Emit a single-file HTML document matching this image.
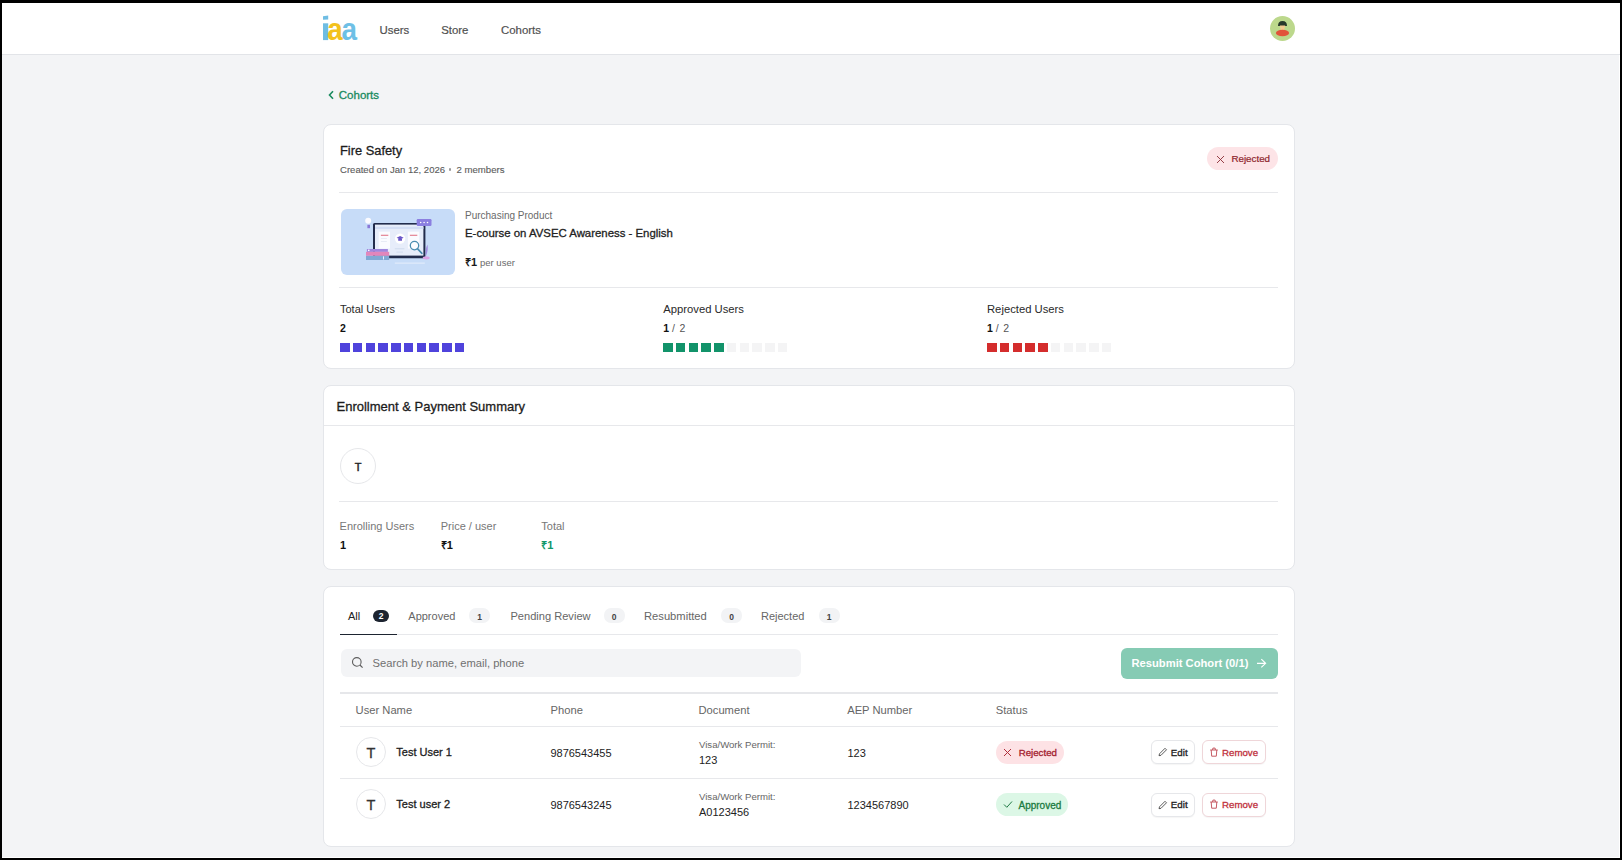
<!DOCTYPE html>
<html><head><meta charset="utf-8">
<style>
*{box-sizing:border-box;margin:0;padding:0}
html,body{width:1622px;height:860px;overflow:hidden;background:#000}
body{font-family:"Liberation Sans",sans-serif;position:relative;color:#1f2937}
#bg{position:absolute;left:2px;top:3px;width:1618px;height:855px;background:#fff}
#page{position:absolute;left:2px;top:55px;width:1617px;height:802px;background:#f3f4f6}
.t{position:absolute;line-height:1;white-space:nowrap}
.b{position:absolute}
.m{-webkit-text-stroke-width:0.3px}
.m2{-webkit-text-stroke-width:0.2px}
.hr{position:absolute;height:1px;background:#e7e8eb}
.card{position:absolute;left:323px;width:972px;background:#fff;border:1px solid #e4e6ea;border-radius:8px}
.sq{position:absolute;top:343.2px;width:9.6px;height:9px}
.sb{position:absolute;border-radius:7px;background:#f2f3f5;height:15px;top:608px;width:21px;font-size:8.5px;font-weight:bold;color:#444;text-align:center;line-height:18px}
</style></head><body>
<div id="bg"></div>
<!-- header -->
<div class="hr" style="left:2px;top:54px;width:1618px;background:#e2e4e8"></div>
<div id="page"></div>

<svg class="b" style="left:318px;top:12px" width="44" height="32" viewBox="0 0 44 32">
  <path d="M5 4.2 L10.2 3.6 L10.2 7.6 L5 7.8Z" fill="#6fbde3"/>
  <rect x="5" y="11.3" width="5.2" height="16.8" fill="#6fbde3"/>
  <text x="9.2" y="28.3" font-family="Liberation Sans" font-weight="bold" font-size="31" fill="#f3c21c" textLength="15.5" lengthAdjust="spacingAndGlyphs">a</text>
  <text x="23.6" y="28.3" font-family="Liberation Sans" font-weight="bold" font-size="31" fill="#6ec0e6" textLength="15.5" lengthAdjust="spacingAndGlyphs">a</text>
</svg>
<div class="t m2" style="left:379.5px;top:25.1px;font-size:11.4px;color:#505050">Users</div>
<div class="t m2" style="left:441.2px;top:25.1px;font-size:11.4px;color:#505050">Store</div>
<div class="t m2" style="left:501px;top:25.1px;font-size:11.4px;color:#505050">Cohorts</div>

<div class="b" style="left:1270px;top:16px;width:25px;height:25px;border-radius:50%;background:#bcd88c;overflow:hidden">
  <svg width="25" height="25" viewBox="0 0 25 25">
    <path d="M8 10 Q8 5 12.5 5 Q17 5 17 10 Z" fill="#27382a"/>
    <path d="M9.8 9.5 L15.2 9.5 L14.2 14 L10.8 14Z" fill="#f3c98e"/>
    <ellipse cx="12.5" cy="17" rx="6.6" ry="3.2" fill="#e1533a"/>
  </svg>
</div>

<!-- back link -->
<svg class="b" style="left:328px;top:90px" width="7" height="10" viewBox="0 0 7 10"><path d="M5 1.2 L1.5 5 L5 8.8" fill="none" stroke="#198a5e" stroke-width="1.6"/></svg>
<div class="t m" style="left:338.8px;top:89.5px;font-size:11.5px;color:#198a5e">Cohorts</div>

<!-- Card 1 -->
<div class="card" style="top:124px;height:245px"></div>
<div class="t m" style="left:340px;top:145.3px;font-size:12.85px;color:#1c1c1c">Fire Safety</div>
<div class="t" style="left:340px;top:164.6px;font-size:9.55px;color:#5c5c5c;-webkit-text-stroke-width:0.12px">Created on Jan 12, 2026</div>
<div class="b" style="left:449px;top:168.4px;width:2.2px;height:2.2px;border-radius:50%;background:#999"></div>
<div class="t" style="left:456.5px;top:164.6px;font-size:9.6px;color:#5c5c5c;-webkit-text-stroke-width:0.12px">2 members</div>

<div class="b" style="left:1207px;top:147px;width:71px;height:22.5px;border-radius:12px;background:#fde4e7"></div>
<svg class="b" style="left:1216px;top:154.5px" width="9" height="9" viewBox="0 0 9 9"><path d="M1 1L8 8M8 1L1 8" stroke="#8b2c35" stroke-width="0.9"/></svg>
<div class="t m2" style="left:1231.4px;top:153.9px;font-size:9.8px;color:#8e1f2c">Rejected</div>

<div class="hr" style="left:339px;top:192px;width:939px"></div>

<div class="b" style="left:340.5px;top:209px;width:114.5px;height:66px;border-radius:6px;background:#c7dcf8;overflow:hidden">
  <svg width="115" height="66" viewBox="0 0 115 66">
    <rect x="53.8" y="53.6" width="30" height="1" fill="#e6eefc"/>
    <rect x="32" y="13.9" width="52.4" height="35.3" rx="1.5" fill="#222c4c"/>
    <rect x="34" y="15.6" width="48.4" height="31" fill="#e7edfa"/>
    <rect x="34" y="17.8" width="48.4" height="2.2" fill="#d3def5"/>
    <rect x="37.7" y="22.6" width="11.3" height="17" fill="#fafbff"/>
    <rect x="66.9" y="22.6" width="11.4" height="17" fill="#fafbff"/>
    <rect x="39.9" y="25.7" width="7.4" height="1.3" fill="#e58d9c"/>
    <rect x="68.9" y="25.7" width="7.4" height="1.3" fill="#e58d9c"/>
    <rect x="39.9" y="29" width="6" height="0.8" fill="#e3e8f3"/>
    <rect x="39.9" y="32" width="6" height="0.8" fill="#e3e8f3"/>
    <circle cx="59.1" cy="29.6" r="5.2" fill="#fff"/>
    <path d="M55.6 28.8 L59.1 27 L62.6 28.8 L59.1 30.6Z" fill="#6b57c9"/>
    <path d="M57.2 29.8 L57.2 31.8 L61 31.8 L61 29.8Z" fill="#6b57c9"/>
    <rect x="53.8" y="39.2" width="9.6" height="1.1" fill="#d2dcef"/>
    <rect x="55.5" y="42.6" width="6.5" height="1" fill="#d2dcef"/>
    <circle cx="73.5" cy="36.6" r="4.2" fill="rgba(255,255,255,0.35)" stroke="#4a8cb0" stroke-width="1.3"/>
    <path d="M76.4 39.6 L80.9 44.4" stroke="#4a8cb0" stroke-width="1.6" stroke-linecap="round"/>
    <rect x="75.7" y="10" width="14.8" height="7" rx="1.2" fill="#8b7fe0"/>
    <circle cx="79.7" cy="13.5" r="0.8" fill="#fff"/><circle cx="83.1" cy="13.5" r="0.8" fill="#fff"/><circle cx="86.5" cy="13.5" r="0.8" fill="#fff"/>
    <rect x="25.9" y="40" width="21" height="2.9" fill="#9e86dd"/>
    <rect x="27" y="40.6" width="1.5" height="1.5" fill="#fff"/>
    <rect x="25" y="42.8" width="23.2" height="4" fill="#e286bb"/>
    <rect x="25" y="46.9" width="23.2" height="4.1" fill="#80a9d4"/>
    <rect x="42" y="47.3" width="1" height="3.2" fill="#e7efff"/>
    <circle cx="27.2" cy="11.8" r="3" fill="#fbfbff"/>
    <rect x="26.4" y="15.8" width="2.6" height="3.4" fill="#8a78d8"/>
    <path d="M85 47 Q87.5 41 86.5 35.5 Q84 40 85 47Z" fill="#a08be0"/>
    <ellipse cx="85.2" cy="48.8" rx="3.5" ry="1.6" fill="#dba3e6"/>
  </svg>
</div>
<div class="t" style="left:465px;top:211.4px;font-size:10px;color:#6a6a6a">Purchasing Product</div>
<div class="t m" style="left:465px;top:227.6px;font-size:11.4px;color:#222">E-course on AVSEC Awareness - English</div>
<div class="t" style="left:465px;top:257.2px;font-size:11px;color:#1a1a1a;font-weight:bold">&#8377;1</div>
<div class="t" style="left:480px;top:257.7px;font-size:9.5px;color:#6a6a6a">per user</div>

<div class="hr" style="left:339px;top:287px;width:939px"></div>

<div class="t" style="left:340px;top:303.5px;font-size:11px;color:#2a2a2a">Total Users</div>
<div class="t" style="left:340px;top:322.9px;font-size:10.5px;color:#111;font-weight:bold">2</div>
<div class="t" style="left:663.3px;top:304px;font-size:11.25px;color:#2a2a2a">Approved Users</div>
<div class="t" style="left:663.3px;top:322.9px;font-size:10.5px;color:#111"><b>1</b>&nbsp;<span style="color:#555;word-spacing:1.6px">/ 2</span></div>
<div class="t" style="left:987px;top:304px;font-size:11.25px;color:#2a2a2a">Rejected Users</div>
<div class="t" style="left:987px;top:322.9px;font-size:10.5px;color:#111"><b>1</b>&nbsp;<span style="color:#555;word-spacing:1.6px">/ 2</span></div>

<div class="sq" style="left:340.00px;background:#4f43dc"></div><div class="sq" style="left:352.75px;background:#4f43dc"></div><div class="sq" style="left:365.50px;background:#4f43dc"></div><div class="sq" style="left:378.25px;background:#4f43dc"></div><div class="sq" style="left:391.00px;background:#4f43dc"></div><div class="sq" style="left:403.75px;background:#4f43dc"></div><div class="sq" style="left:416.50px;background:#4f43dc"></div><div class="sq" style="left:429.25px;background:#4f43dc"></div><div class="sq" style="left:442.00px;background:#4f43dc"></div><div class="sq" style="left:454.75px;background:#4f43dc"></div>
<div class="sq" style="left:663.00px;background:#12936a"></div><div class="sq" style="left:675.75px;background:#12936a"></div><div class="sq" style="left:688.50px;background:#12936a"></div><div class="sq" style="left:701.25px;background:#12936a"></div><div class="sq" style="left:714.00px;background:#12936a"></div><div class="sq" style="left:726.75px;background:#f4f4f5"></div><div class="sq" style="left:739.50px;background:#f4f4f5"></div><div class="sq" style="left:752.25px;background:#f4f4f5"></div><div class="sq" style="left:765.00px;background:#f4f4f5"></div><div class="sq" style="left:777.75px;background:#f4f4f5"></div>
<div class="sq" style="left:987.00px;background:#d42d2d"></div><div class="sq" style="left:999.75px;background:#d42d2d"></div><div class="sq" style="left:1012.50px;background:#d42d2d"></div><div class="sq" style="left:1025.25px;background:#d42d2d"></div><div class="sq" style="left:1038.00px;background:#d42d2d"></div><div class="sq" style="left:1050.75px;background:#f4f4f5"></div><div class="sq" style="left:1063.50px;background:#f4f4f5"></div><div class="sq" style="left:1076.25px;background:#f4f4f5"></div><div class="sq" style="left:1089.00px;background:#f4f4f5"></div><div class="sq" style="left:1101.75px;background:#f4f4f5"></div>

<!-- Card 2 -->
<div class="card" style="top:385px;height:185px"></div>
<div class="t m" style="left:336.5px;top:400.4px;font-size:13px;color:#1c1c1c">Enrollment &amp; Payment Summary</div>
<div class="hr" style="left:324px;top:425px;width:970px"></div>
<div class="b" style="left:340px;top:448px;width:36px;height:36px;border-radius:50%;border:1px solid #e6e7ea"></div>
<div class="t m" style="left:340px;width:36px;text-align:center;top:461.7px;font-size:11px;color:#222;-webkit-text-stroke-width:0.45px">T</div>
<div class="hr" style="left:339px;top:501px;width:939px"></div>
<div class="t" style="left:339.6px;top:520.7px;font-size:11px;color:#777">Enrolling Users</div>
<div class="t" style="left:340px;top:539.7px;font-size:11px;color:#111;font-weight:bold">1</div>
<div class="t" style="left:440.7px;top:520.7px;font-size:11px;color:#777">Price / user</div>
<div class="t" style="left:440.7px;top:539.7px;font-size:11px;color:#111;font-weight:bold">&#8377;1</div>
<div class="t" style="left:541.3px;top:520.7px;font-size:11px;color:#777">Total</div>
<div class="t" style="left:541.3px;top:539.7px;font-size:11px;color:#10976a;font-weight:bold">&#8377;1</div>

<!-- Card 3 -->
<div class="card" style="top:586px;height:261px"></div>
<div class="t" style="left:348px;top:610.7px;font-size:11px;color:#222">All</div>
<div class="b" style="left:373px;top:610px;width:16px;height:12px;border-radius:6px;background:#1d2430;color:#fff;font-size:8.5px;font-weight:bold;text-align:center;line-height:13px">2</div>
<div class="t" style="left:408.3px;top:610.7px;font-size:11px;color:#666">Approved</div>
<div class="sb" style="left:469px">1</div>
<div class="t" style="left:510.4px;top:610.7px;font-size:11.1px;color:#666">Pending Review</div>
<div class="sb" style="left:603.6px">0</div>
<div class="t" style="left:644px;top:610.7px;font-size:11.2px;color:#666">Resubmitted</div>
<div class="sb" style="left:721px">0</div>
<div class="t" style="left:761px;top:610.7px;font-size:11px;color:#666">Rejected</div>
<div class="sb" style="left:818.5px">1</div>
<div class="hr" style="left:340px;top:634px;width:938px"></div>
<div class="b" style="left:340px;top:633.5px;width:57px;height:1.6px;background:#1d2430"></div>

<div class="b" style="left:341px;top:648.5px;width:460px;height:28.5px;border-radius:6px;background:#f3f4f6"></div>
<svg class="b" style="left:351px;top:656px" width="14" height="14" viewBox="0 0 14 14"><circle cx="5.8" cy="5.9" r="4.3" fill="none" stroke="#5e5e5e" stroke-width="1.1"/><path d="M8.9 9 L11.6 11.6" stroke="#5e5e5e" stroke-width="1.2"/></svg>
<div class="t" style="left:372.5px;top:657.5px;font-size:11.2px;color:#707070">Search by name, email, phone</div>

<div class="b" style="left:1121px;top:648px;width:157px;height:30.5px;border-radius:6px;background:#86cbb4"></div>
<div class="t" style="left:1131.5px;top:657.8px;font-size:11.2px;color:#fff;font-weight:bold">Resubmit Cohort (0/1)</div>
<svg class="b" style="left:1255px;top:657px" width="12" height="12" viewBox="0 0 12 12"><path d="M2 6.3 L10.6 6.3 M6.3 2.2 L10.6 6.3 L6.3 10.4" fill="none" stroke="#fff" stroke-width="1.15"/></svg>

<div class="b" style="left:340px;top:692px;width:938px;height:2px;background:#e6e7ea"></div>
<div class="t" style="left:355.6px;top:704.9px;font-size:11.2px;color:#666">User Name</div>
<div class="t" style="left:550.6px;top:704.9px;font-size:11.2px;color:#666">Phone</div>
<div class="t" style="left:698.5px;top:704.9px;font-size:11.2px;color:#666">Document</div>
<div class="t" style="left:847.2px;top:704.9px;font-size:11.2px;color:#666">AEP Number</div>
<div class="t" style="left:995.8px;top:704.9px;font-size:11.2px;color:#666">Status</div>
<div class="hr" style="left:340px;top:726px;width:938px"></div>

<!-- row 1 -->
<div class="b" style="left:356px;top:737px;width:30px;height:30px;border-radius:50%;border:1px solid #e6e7ea"></div>
<div class="t m" style="left:356px;width:30px;text-align:center;top:745.5px;font-size:14.5px;color:#333">T</div>
<div class="t m" style="left:396.3px;top:747.1px;font-size:11px;color:#222">Test User 1</div>
<div class="t" style="left:550.4px;top:747.7px;font-size:11px;color:#222">9876543455</div>
<div class="t" style="left:699px;top:739.9px;font-size:9.6px;color:#666">Visa/Work Permit:</div>
<div class="t" style="left:699px;top:754.7px;font-size:11px;color:#222">123</div>
<div class="t" style="left:847.5px;top:747.9px;font-size:11px;color:#222">123</div>
<div class="b" style="left:996px;top:741px;width:68px;height:22.5px;border-radius:12px;background:#fde2e5"></div>
<svg class="b" style="left:1002.5px;top:748px" width="9" height="9" viewBox="0 0 9 9"><path d="M1 1L8 8M8 1L1 8" stroke="#b0303c" stroke-width="1"/></svg>
<div class="t m" style="left:1018.7px;top:748.2px;font-size:9.7px;color:#a3202d">Rejected</div>
<div class="b" style="left:1150.5px;top:740px;width:44.5px;height:24px;border-radius:6px;border:1px solid #e6e7ea;background:#fff;box-shadow:0 1px 1px rgba(0,0,0,0.04)"></div>
<svg class="b" style="left:1157px;top:747px" width="11" height="11" viewBox="0 0 11 11"><path d="M2 8.7 L2.5 6.8 L8 1.3 L9.5 2.8 L4 8.3 Z" fill="none" stroke="#333" stroke-width="0.8"/></svg>
<div class="t m" style="left:1170.8px;top:747.9px;font-size:9.8px;color:#222">Edit</div>
<div class="b" style="left:1202.4px;top:740px;width:63.5px;height:24px;border-radius:6px;border:1px solid #efd6d9;background:#fff;box-shadow:0 1px 1px rgba(0,0,0,0.04)"></div>
<svg class="b" style="left:1209px;top:746.5px" width="10" height="11" viewBox="0 0 10 11"><path d="M1.2 3 L8.8 3 M3.6 3 L3.9 1.1 L6.1 1.1 L6.4 3 M2.2 3 L2.7 9.2 L7.3 9.2 L7.8 3" fill="none" stroke="#bf4a54" stroke-width="0.9"/></svg>
<div class="t m" style="left:1222px;top:747.6px;font-size:9.7px;color:#c0303c">Remove</div>
<div class="hr" style="left:340px;top:778px;width:938px"></div>

<!-- row 2 -->
<div class="b" style="left:356px;top:789px;width:30px;height:30px;border-radius:50%;border:1px solid #e6e7ea"></div>
<div class="t m" style="left:356px;width:30px;text-align:center;top:797.5px;font-size:14.5px;color:#333">T</div>
<div class="t m" style="left:396.3px;top:799.1px;font-size:11px;color:#222">Test user 2</div>
<div class="t" style="left:550.4px;top:799.7px;font-size:11px;color:#222">9876543245</div>
<div class="t" style="left:699px;top:791.9px;font-size:9.6px;color:#666">Visa/Work Permit:</div>
<div class="t" style="left:699px;top:806.7px;font-size:11px;color:#222">A0123456</div>
<div class="t" style="left:847.5px;top:799.9px;font-size:11px;color:#222">1234567890</div>
<div class="b" style="left:996px;top:793px;width:72px;height:22.5px;border-radius:12px;background:#dcf7e6"></div>
<svg class="b" style="left:1002.5px;top:800px" width="10" height="9" viewBox="0 0 10 9"><path d="M1 4.5 L3.8 7.3 L9 1.5" fill="none" stroke="#207a45" stroke-width="1"/></svg>
<div class="t m" style="left:1018.5px;top:800.8px;font-size:10px;color:#1a7a40">Approved</div>
<div class="b" style="left:1150.5px;top:792.5px;width:44.5px;height:24px;border-radius:6px;border:1px solid #e6e7ea;background:#fff;box-shadow:0 1px 1px rgba(0,0,0,0.04)"></div>
<svg class="b" style="left:1157px;top:799.5px" width="11" height="11" viewBox="0 0 11 11"><path d="M2 8.7 L2.5 6.8 L8 1.3 L9.5 2.8 L4 8.3 Z" fill="none" stroke="#333" stroke-width="0.8"/></svg>
<div class="t m" style="left:1170.8px;top:800.1px;font-size:9.8px;color:#222">Edit</div>
<div class="b" style="left:1202.4px;top:792.5px;width:63.5px;height:24px;border-radius:6px;border:1px solid #efd6d9;background:#fff;box-shadow:0 1px 1px rgba(0,0,0,0.04)"></div>
<svg class="b" style="left:1209px;top:799px" width="10" height="11" viewBox="0 0 10 11"><path d="M1.2 3 L8.8 3 M3.6 3 L3.9 1.1 L6.1 1.1 L6.4 3 M2.2 3 L2.7 9.2 L7.3 9.2 L7.8 3" fill="none" stroke="#bf4a54" stroke-width="0.9"/></svg>
<div class="t m" style="left:1222px;top:799.8px;font-size:9.7px;color:#c0303c">Remove</div>

</body></html>
